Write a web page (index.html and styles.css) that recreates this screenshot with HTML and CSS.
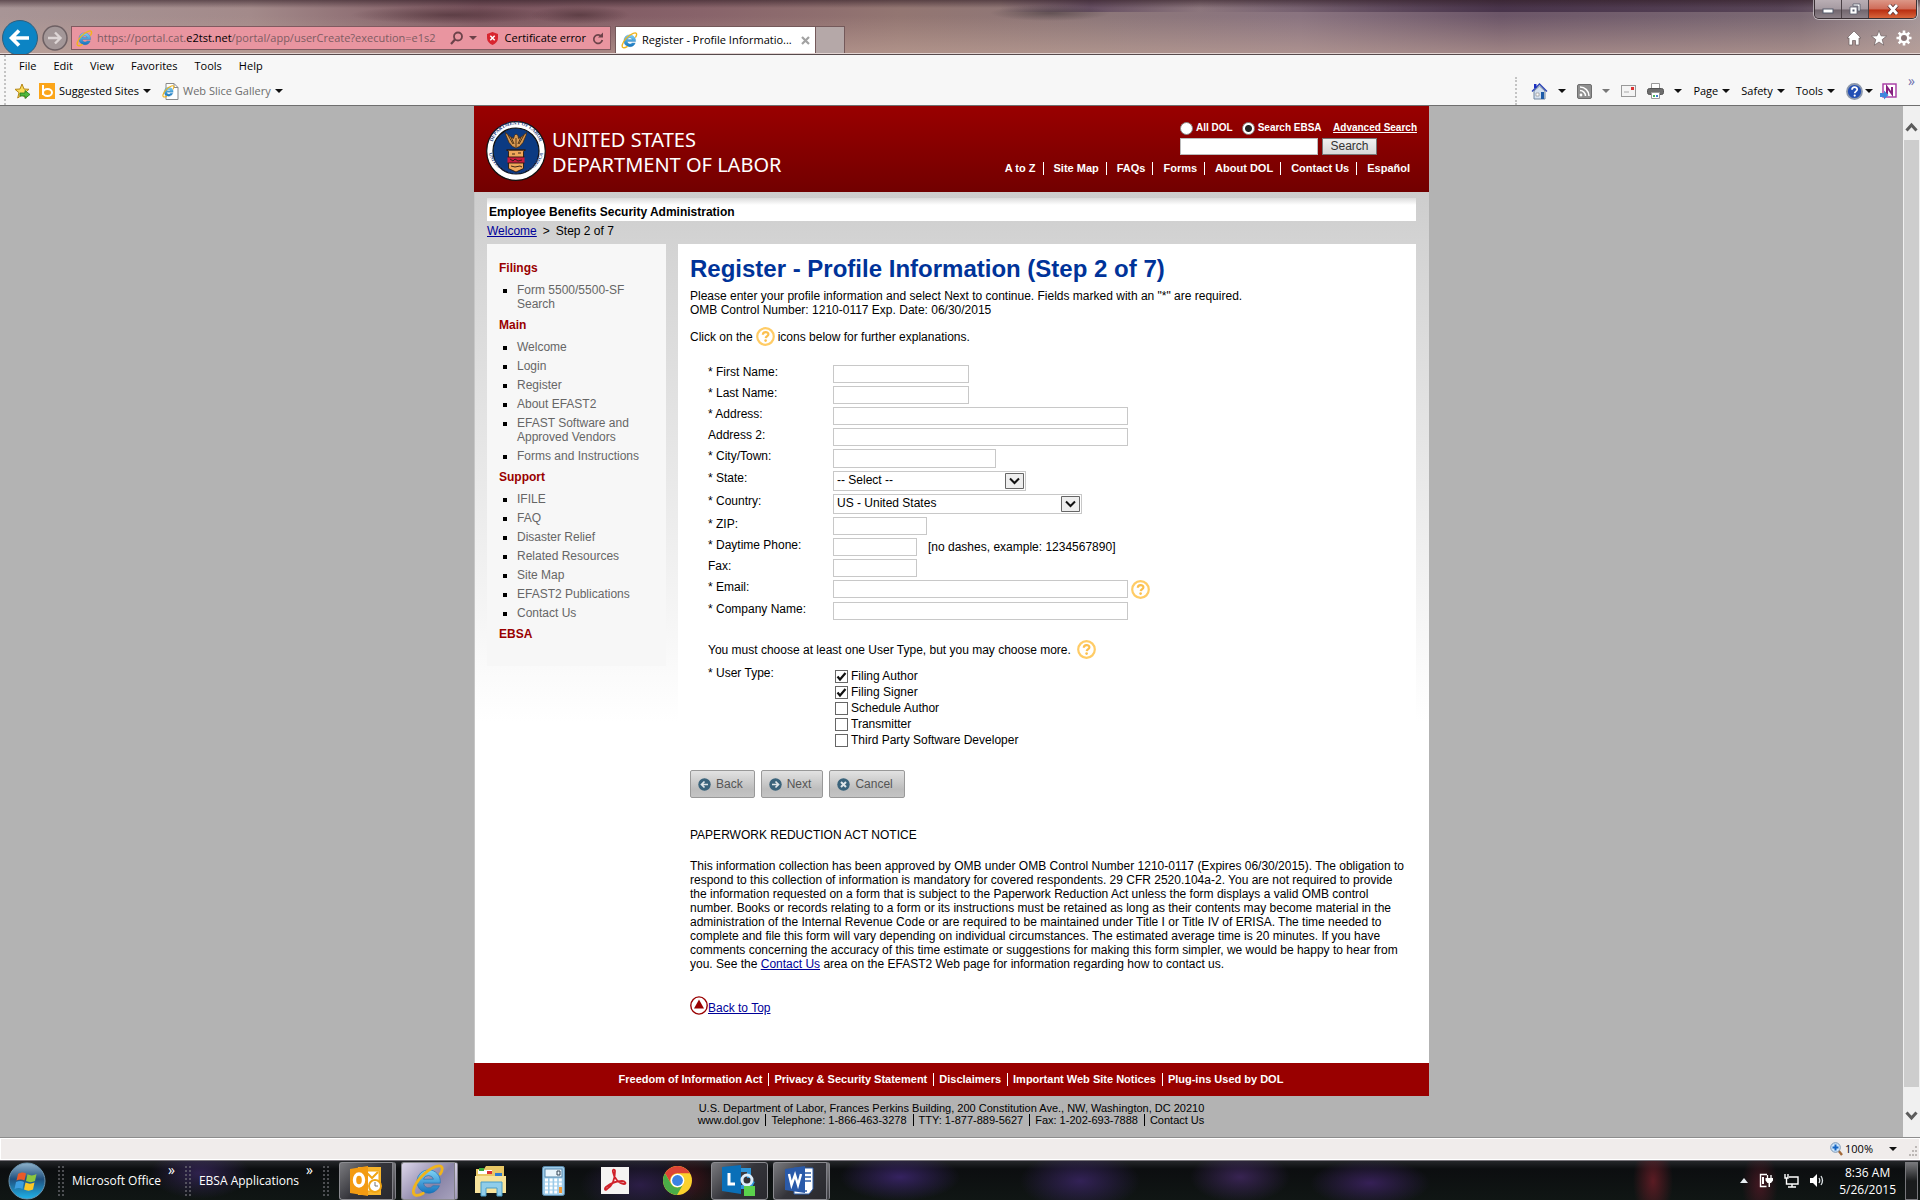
FILE: index.html
```html
<!DOCTYPE html>
<html lang="en">
<head>
  <meta charset="UTF-8" />
  <meta name="viewport" content="width=device-width, initial-scale=1.0"/>
  <title>Register - Profile Information</title>
  <link rel="stylesheet" href="styles.css">
</head>
<body>

<!-- shared icons -->
<svg class="defs" width="0" height="0" aria-hidden="true">
  <defs>
    <linearGradient id="g-ie" x1="0" y1="0" x2="0" y2="1">
      <stop offset="0" stop-color="#7fd3f7"/><stop offset="1" stop-color="#1573bd"/>
    </linearGradient>
    <linearGradient id="g-orb" x1="0" y1="0" x2="0" y2="1">
      <stop offset="0" stop-color="#8fb3cc"/><stop offset=".45" stop-color="#1f4f7d"/><stop offset="1" stop-color="#1fb4ea"/>
    </linearGradient>
    <symbol id="ie" viewBox="0 0 32 32">
      <path d="M16.500 5.500a11 11 0 1 0 10.300 15h-6.100a5 5 0 0 1-9-2.500h15.800a11 11 0 0 0-11-12.500zM11.700 14.300a5 5 0 0 1 9.500 0z" fill="url(#g-ie)" stroke="#1c6fb0" stroke-width=".6"/>
      <path d="M27.500 9.500C31 4 29.500 0 23 2.500 14 6 4.500 16 2.500 24c-1.500 6 3 7 9 3.500" fill="none" stroke="#f0b41c" stroke-width="2.600" stroke-linecap="round"/>
    </symbol>
    <symbol id="help" viewBox="0 0 19 19">
      <circle cx="9.500" cy="9.500" r="8.300" fill="#fff" stroke="#fc6" stroke-width="2.200"/>
      <path d="M6.800 7.800c0-3.600 5.600-3.400 5.600-.6 0 2-2.400 1.700-2.700 4" fill="none" stroke="#fbbf4d" stroke-width="2.200"/>
      <circle cx="9.600" cy="13.600" r="1.300" fill="#fbbf4d"/>
    </symbol>
  </defs>
</svg>

<header class="titlebar">
  <button class="nav-back" aria-label="Back">
    <svg width="36" height="36" viewBox="0 0 36 36"><circle cx="18" cy="18" r="17.500" fill="#0c84c4" stroke="#2f5f7d"/><path d="M27 18H10M17 10.500L9.500 18l7.500 7.500" fill="none" stroke="#fff" stroke-width="3.600"/></svg>
  </button>
  <button class="nav-forward" aria-label="Forward">
    <svg width="26" height="26" viewBox="0 0 26 26"><circle cx="13" cy="13" r="12" fill="#a39798" stroke="#6d6063" stroke-width="1.500"/><path d="M6 13h12M13 7.500l5.500 5.500-5.500 5.500" fill="none" stroke="#ddd5d5" stroke-width="2.400"/></svg>
  </button>
  <div class="address">
    <svg width="17" height="17"><use href="#ie"/></svg>
    <span class="url">https://portal.cat.<b>e2tst.net</b>/portal/app/userCreate?execution=e1s2</span>
    <button aria-label="Search"><svg width="14" height="14" viewBox="0 0 14 14"><circle cx="8" cy="5.500" r="4" fill="none" stroke="#6b4249" stroke-width="1.800"/><path d="M5 8.500L1 13" stroke="#6b4249" stroke-width="2.200"/></svg></button>
    <i class="caret rose"></i>
    <button class="cert"><svg width="11" height="13" viewBox="0 0 11 13"><path d="M5.500 0L11 2v4c0 3-2 5.500-5.500 7C2 11.500 0 9 0 6V2z" fill="#d8242f"/><path d="M3.300 3.800l4.400 4.400m0-4.400L3.300 8.200" stroke="#fff" stroke-width="1.500"/></svg>Certificate error</button>
    <button aria-label="Refresh"><svg width="12" height="13" viewBox="0 0 12 13"><path d="M9.500 4.500A4.300 4.300 0 1 0 10.300 8" fill="none" stroke="#6b4249" stroke-width="1.700"/><path d="M11 .5v5H6z" fill="#6b4249"/></svg></button>
  </div>
  <div class="tab">
    <svg width="17" height="17"><use href="#ie"/></svg>
    <span class="tab-title">Register - Profile Informatio...</span>
    <button aria-label="Close tab"><svg width="9" height="9" viewBox="0 0 9 9"><path d="M1 1l7 7m0-7L1 8" stroke="#a2a2a2" stroke-width="2.200"/></svg></button>
  </div>
  <button class="new-tab" aria-label="New tab"></button>
  <div class="title-right">
    <div class="win-buttons">
      <button aria-label="Minimize"><svg width="12" height="12" viewBox="0 0 12 12"><rect x="1" y="6" width="10" height="4" fill="#fff" stroke="#555a6b"/></svg></button>
      <button aria-label="Restore"><svg width="12" height="12" viewBox="0 0 12 12"><path d="M4 1h7v7H9V3H4z" fill="#fff" stroke="#555a6b" stroke-width=".8"/><path d="M1 4h7v7H1z" fill="#fff" stroke="#555a6b" stroke-width=".8"/><rect x="3.500" y="6.500" width="2" height="2" fill="#555a6b"/></svg></button>
      <button class="close" aria-label="Close"><svg width="12" height="11" viewBox="0 0 12 11"><path d="M2 1l8 9M10 1L2 10" stroke="#5a3336" stroke-width="4.400"/><path d="M2 1l8 9M10 1L2 10" stroke="#fff" stroke-width="2.800"/></svg></button>
    </div>
    <div class="ie-buttons">
      <button aria-label="Home"><svg width="16" height="16" viewBox="0 0 16 16"><path d="M8 1l7 7h-2v7H9.500v-4.500h-3V15H3V8H1z" fill="#fff" stroke="#6c5f60" stroke-width=".7"/></svg></button>
      <button aria-label="Favorites"><svg width="16" height="16" viewBox="0 0 16 16"><path d="M8 .5l2 5.300 5.600.3-4.400 3.500 1.500 5.600L8 12l-4.700 3.200 1.500-5.600L.4 6.100 6 5.800z" fill="#fff" stroke="#6c5f60" stroke-width=".7"/></svg></button>
      <button aria-label="Settings"><svg width="16" height="16" viewBox="0 0 16 16"><g stroke="#fff" stroke-width="2.600"><path d="M8 .5v15M.5 8h15M2.700 2.700l10.600 10.600M13.300 2.700L2.700 13.300"/></g><circle cx="8" cy="8" r="5.400" fill="#fff"/><circle cx="8" cy="8" r="3" fill="#8b7778"/></svg></button>
    </div>
  </div>
</header>

<div class="toolbars">
  <div class="left-bars">
    <nav class="menubar">
      <button>File</button><button>Edit</button><button>View</button><button>Favorites</button><button>Tools</button><button>Help</button>
    </nav>
    <div class="favbar">
      <button aria-label="Add to Favorites bar"><svg width="17" height="17" viewBox="0 0 17 17"><path d="M8 1l2 5 5 .3-4 3.400 1.300 5.300L8 12l-4.300 3L5 9.700l-4-3.400L6 6z" fill="#fbdc5a" stroke="#b58616"/><path d="M6 10h5V7.500l5 4-5 4V13H6z" fill="#4fb83c" stroke="#25761c" stroke-width=".8"/></svg></button>
      <button class="fav"><svg width="16" height="16" viewBox="0 0 16 16"><rect width="16" height="16" fill="#fba51a"/><path d="M4 2v10" stroke="#fff" stroke-width="2"/><ellipse cx="8.500" cy="9.500" rx="4.500" ry="3.500" fill="none" stroke="#fff" stroke-width="2"/></svg>Suggested Sites<i class="caret"></i></button>
      <button class="fav muted"><svg width="17" height="17" viewBox="0 0 17 17"><path d="M4 .5h8l4 4v12H4z" fill="#fff" stroke="#8a8a8a"/><path d="M12 .5v4h4" fill="none" stroke="#8a8a8a"/><svg x="0" y="2" width="13" height="13"><use href="#ie"/></svg></svg>Web Slice Gallery<i class="caret"></i></button>
    </div>
  </div>
  <div class="cmdbar">
    <button aria-label="Home page"><svg width="17" height="17" viewBox="0 0 17 17"><path d="M3 8v8h11V8L8.500 3z" fill="#d5e0ee" stroke="#71869f"/><path d="M1 8.500L8.500 1 16 8.500" fill="none" stroke="#2b43b5" stroke-width="1.300"/><path d="M3 1h2.500v4H3z" fill="#1a2fc0"/><path d="M5 10h3v3H5z" fill="#fff" stroke="#888" stroke-width=".6"/><path d="M10 9h3v7h-3z" fill="#1d5aa8"/></svg><i class="caret"></i></button>
    <button aria-label="Feeds"><svg width="15" height="15" viewBox="0 0 15 15"><rect x=".5" y=".5" width="14" height="14" rx="1.500" fill="#8f8f8f" stroke="#6e6e6e"/><circle cx="4" cy="11" r="1.400" fill="#fff"/><path d="M3 6.500a5.500 5.500 0 0 1 5.500 5.500M3 3a9 9 0 0 1 9 9" fill="none" stroke="#fff" stroke-width="1.500"/></svg><i class="caret grey"></i></button>
    <button aria-label="Read mail"><svg width="15" height="12" viewBox="0 0 15 12"><rect x=".5" y=".5" width="14" height="11" fill="#f4f4f4" stroke="#999"/><rect x="10" y="2" width="3" height="3" fill="#d33"/><path d="M3 7h5" stroke="#aaa"/></svg></button>
    <button aria-label="Print"><svg width="17" height="16" viewBox="0 0 17 16"><path d="M4.500.5h8v6h-8z" fill="#fff" stroke="#9a9a9a"/><rect x=".5" y="5.500" width="16" height="6" rx="2" fill="#6d6d6d" stroke="#555"/><path d="M4.500 9.500h8v6h-8z" fill="#fff" stroke="#9a9a9a"/><path d="M6 12h2v2H6z" fill="#46b45a"/><path d="M9 12h2v2H9z" fill="#3b7bd0"/></svg><i class="caret"></i></button>
    <button class="txt">Page<i class="caret"></i></button>
    <button class="txt">Safety<i class="caret"></i></button>
    <button class="txt">Tools<i class="caret"></i></button>
    <button class="tight" aria-label="Help"><svg width="17" height="17" viewBox="0 0 17 17"><circle cx="8.500" cy="8.500" r="7.500" fill="#234fb4" stroke="#8c98ac" stroke-width="1.800"/><path d="M6 6.800c0-3.500 5.200-3.300 5.200-.4 0 2-2.500 1.900-2.500 3.900" fill="none" stroke="#fff" stroke-width="1.700"/><circle cx="8.700" cy="12.600" r="1.100" fill="#fff"/></svg><i class="caret"></i></button>
    <button aria-label="OneNote"><svg width="17" height="17" viewBox="0 0 17 17"><rect x="3" y="1" width="13" height="13" fill="#fff" stroke="#a637a3" stroke-width="1.400"/><path d="M7 11V4l5 7V4" fill="none" stroke="#86207f" stroke-width="2"/><path d="M0 10h4V7.500l4.500 4.500L4 16.500V14H0z" fill="#3f87dd"/></svg></button>
    <span class="more">»</span>
  </div>
</div>

<div class="viewport">
  <div class="canvas">
    <div class="site">
      <div class="banner">
        <svg class="seal" width="60" height="60" viewBox="0 0 60 60" role="img" aria-label="Department of Labor seal">
          <defs>
            <path id="arc-top" d="M6 33A24.500 24.500 0 1 1 54 33"/>
            <path id="arc-bottom" d="M1.800 27A28.300 28.300 0 0 0 58.200 27"/>
          </defs>
          <circle cx="30" cy="30" r="29.300" fill="#fff" stroke="#111" stroke-width="1.200"/>
          <circle cx="30" cy="30" r="23" fill="#0b3a82" stroke="#111" stroke-width="1.200"/>
          <text class="seal-text"><textPath href="#arc-top" startOffset="50%">DEPARTMENT OF LABOR</textPath></text>
          <text class="seal-text"><textPath href="#arc-bottom" startOffset="50%">UNITED STATES OF AMERICA</textPath></text>
          <path d="M30 27l-3.500-1.500-3.500-4-3-7-.5-3 4.500 4 3.500 2 1-3 1.500-1.500 2 1.500.5 3 3.500-2 4.500-4-.5 3-3 7-3.500 4z" fill="#d99a52" stroke="#432a10" stroke-width=".8"/>
          <path d="M22 14l5 9m-2-7l3 7m10-9l-5 9m2-7l-3 7M30 17v9" stroke="#432a10" stroke-width=".9"/>
          <path d="M21 29h18l-1.500 1.500v17L30 51l-7.500-3.500v-17z" fill="#efa75a" stroke="#2a1a10" stroke-width=".9"/>
          <rect x="21.500" y="36" width="17" height="6" fill="#c91b3f"/>
          <path d="M20 29h20M21.500 36h17M21.500 42h17M24 38l3 2 2-2 3 2 4-1M26 33h3m3-1h3M25 45l4 1 5-1 2 1" fill="none" stroke="#2a1a10" stroke-width=".9"/>
        </svg>
        <div class="dept">UNITED STATES<br>DEPARTMENT OF LABOR</div>
        <div class="banner-right">
          <form class="search">
            <div class="scope">
              <label><input type="radio" name="scope">All DOL</label>
              <label><input type="radio" name="scope" checked>Search EBSA</label>
              <a href="#">Advanced Search</a>
            </div>
            <div class="query">
              <input type="text" aria-label="Search terms">
              <button type="button">Search</button>
            </div>
          </form>
          <nav class="links">
            <a href="#">A to Z</a><a href="#">Site Map</a><a href="#">FAQs</a><a href="#">Forms</a><a href="#">About DOL</a><a href="#">Contact Us</a><a href="#">Español</a>
          </nav>
        </div>
      </div>

      <div class="page">
        <div class="agency">Employee Benefits Security Administration</div>
        <div class="crumbs"><a href="#">Welcome</a><span>&gt;</span><span>Step 2 of 7</span></div>
        <div class="columns">
          <aside class="sidebar">
            <h2>Filings</h2>
            <ul>
              <li><a href="#">Form 5500/5500-SF Search</a></li>
            </ul>
            <h2>Main</h2>
            <ul>
              <li><a href="#">Welcome</a></li>
              <li><a href="#">Login</a></li>
              <li><a href="#">Register</a></li>
              <li><a href="#">About EFAST2</a></li>
              <li><a href="#">EFAST Software and Approved Vendors</a></li>
              <li><a href="#">Forms and Instructions</a></li>
            </ul>
            <h2>Support</h2>
            <ul>
              <li><a href="#">IFILE</a></li>
              <li><a href="#">FAQ</a></li>
              <li><a href="#">Disaster Relief</a></li>
              <li><a href="#">Related Resources</a></li>
              <li><a href="#">Site Map</a></li>
              <li><a href="#">EFAST2 Publications</a></li>
              <li><a href="#">Contact Us</a></li>
            </ul>
            <h2>EBSA</h2>
          </aside>

          <main class="content">
            <h1>Register - Profile Information (Step 2 of 7)</h1>
            <p>Please enter your profile information and select Next to continue. Fields marked with an "*" are required.<br>OMB Control Number: 1210-0117 Exp. Date: 06/30/2015</p>
            <p class="hint">Click on the <svg width="19" height="19"><use href="#help"/></svg> icons below for further explanations.</p>

            <form class="profile">
              <div class="row"><label for="first">* First Name:</label><input id="first" class="w-name" type="text"></div>
              <div class="row"><label for="last">* Last Name:</label><input id="last" class="w-name" type="text"></div>
              <div class="row"><label for="addr">* Address:</label><input id="addr" class="w-long" type="text"></div>
              <div class="row"><label for="addr2">Address 2:</label><input id="addr2" class="w-long" type="text"></div>
              <div class="row"><label for="city">* City/Town:</label><input id="city" class="w-city" type="text"></div>
              <div class="row"><label for="state">* State:</label><select id="state" class="w-state"><option>-- Select --</option></select></div>
              <div class="row"><label for="country">* Country:</label><select id="country" class="w-country"><option>US - United States</option></select></div>
              <div class="row"><label for="zip">* ZIP:</label><input id="zip" class="w-zip" type="text"></div>
              <div class="row"><label for="phone">* Daytime Phone:</label><input id="phone" class="w-phone" type="text"><span class="note">[no dashes, example: 1234567890]</span></div>
              <div class="row"><label for="fax">Fax:</label><input id="fax" class="w-phone" type="text"></div>
              <div class="row"><label for="email">* Email:</label><input id="email" class="w-long" type="text"><svg class="row-help" width="19" height="19"><use href="#help"/></svg></div>
              <div class="row"><label for="company">* Company Name:</label><input id="company" class="w-long" type="text"></div>

              <div class="choose">You must choose at least one User Type, but you may choose more.<svg width="19" height="19"><use href="#help"/></svg></div>
              <div class="row types">
                <span class="label">* User Type:</span>
                <div class="checks">
                  <label><input type="checkbox" checked>Filing Author</label>
                  <label><input type="checkbox" checked>Filing Signer</label>
                  <label><input type="checkbox">Schedule Author</label>
                  <label><input type="checkbox">Transmitter</label>
                  <label><input type="checkbox">Third Party Software Developer</label>
                </div>
              </div>
            </form>

            <div class="actions">
              <button><svg width="13" height="13" viewBox="0 0 13 13"><circle cx="6.500" cy="6.500" r="6.200" fill="#3a637b"/><path d="M10 6.500H4M6.500 3.500l-3 3 3 3" fill="none" stroke="#dfe5e8" stroke-width="1.700"/></svg>Back</button>
              <button><svg width="13" height="13" viewBox="0 0 13 13"><circle cx="6.500" cy="6.500" r="6.200" fill="#3a637b"/><path d="M3 6.500h6M6.500 3.500l3 3-3 3" fill="none" stroke="#dfe5e8" stroke-width="1.700"/></svg>Next</button>
              <button><svg width="13" height="13" viewBox="0 0 13 13"><circle cx="6.500" cy="6.500" r="6.200" fill="#3a637b"/><path d="M4 4l5 5m0-5L4 9" stroke="#dfe5e8" stroke-width="2"/></svg>Cancel</button>
            </div>

            <p class="notice-title">PAPERWORK REDUCTION ACT NOTICE</p>
            <p class="notice">This information collection has been approved by OMB under OMB Control Number 1210-0117 (Expires 06/30/2015). The obligation to respond to this collection of information is mandatory for covered respondents. 29 CFR 2520.104a-2. You are not required to provide the information requested on a form that is subject to the Paperwork Reduction Act unless the form displays a valid OMB control number. Books or records relating to a form or its instructions must be retained as long as their contents may become material in the administration of the Internal Revenue Code or are required to be maintained under Title I or Title IV of ERISA. The time needed to complete and file this form will vary depending on individual circumstances. The estimated average time is 20 minutes. If you have comments concerning the accuracy of this time estimate or suggestions for making this form simpler, we would be happy to hear from you. See the <a href="#">Contact Us</a> area on the EFAST2 Web page for information regarding how to contact us.</p>

            <div class="top-link"><svg width="18" height="19" viewBox="0 0 18 19"><ellipse cx="9" cy="9.500" rx="8.200" ry="8.600" fill="#fff" stroke="#900" stroke-width="1.400"/><path d="M9 3.500l5 9H4z" fill="#900"/></svg><a href="#">Back to Top</a></div>
          </main>
        </div>
      </div>

      <nav class="red-footer">
        <a href="#">Freedom of Information Act</a><a href="#">Privacy &amp; Security Statement</a><a href="#">Disclaimers</a><a href="#">Important Web Site Notices</a><a href="#">Plug-ins Used by DOL</a>
      </nav>
      <footer class="contact">
        <div>U.S. Department of Labor, Frances Perkins Building, 200 Constitution Ave., NW, Washington, DC 20210</div>
        <div class="contact-row"><a href="#">www.dol.gov</a><span>Telephone: 1-866-463-3278</span><span>TTY: 1-877-889-5627</span><span>Fax: 1-202-693-7888</span><a href="#">Contact Us</a></div>
      </footer>
    </div>
  </div>
  <div class="scrollbar">
    <svg width="13" height="11" viewBox="0 0 13 11"><path d="M1.500 8.500l5-5.500 5 5.500" fill="none" stroke="#5c5c5c" stroke-width="3"/></svg>
    <div class="thumb"></div>
    <svg width="13" height="11" viewBox="0 0 13 11"><path d="M1.500 2.500l5 5.500 5-5.500" fill="none" stroke="#5c5c5c" stroke-width="3"/></svg>
  </div>
</div>

<div class="statusbar">
  <button><svg width="13" height="14" viewBox="0 0 13 14"><path d="M8 8l4 5" stroke="#a36a3a" stroke-width="2.400"/><circle cx="5.500" cy="5.500" r="4.800" fill="#cfe6fb" stroke="#7d98b5"/><path d="M5.500 2.500v6m-3-3h6" stroke="#1766c4" stroke-width="2"/></svg>100%<i class="caret"></i></button>
  <svg width="9" height="14" viewBox="0 0 9 14"><path d="M6 4h2v2H6zM3 8h2v2H3zM6 8h2v2H6zM0 12h2v2H0zM3 12h2v2H3zM6 12h2v2H6z" fill="#bdb8b6"/></svg>
</div>

<footer class="taskbar">
  <button class="start" aria-label="Start">
    <svg width="38" height="38" viewBox="0 0 38 38"><circle cx="19" cy="19" r="18" fill="url(#g-orb)" stroke="#6a93ae"/><path d="M10 12c3-2 6-2 8-.5l-1.500 7C14 17 11 17 8.500 18.500z" fill="#ea5a28"/><path d="M19.500 12.300c3 1.500 6 1.500 9-.3L27 19c-3 1.500-6 1.500-9 0z" fill="#8cc63f"/><path d="M8 20c3-1.500 5.500-1.500 8 0l-1.500 7c-2.500-1.500-5-1.500-8 0z" fill="#3c9ee0"/><path d="M17.500 20.500c3 1.500 6 1.500 9 0L25 27.500c-3 1.500-6 1.500-9 0z" fill="#fcc725"/></svg>
  </button>
  <i class="grip"></i>
  <button class="group">Microsoft Office<span class="chev">»</span></button>
  <i class="grip"></i>
  <button class="group">EBSA Applications<span class="chev">»</span></button>
  <i class="grip"></i>
  <div class="apps">
    <button class="app open stack" aria-label="Outlook"><svg width="32" height="30" viewBox="0 0 32 30"><path d="M8 1h23v28H8z" fill="#f7b52c"/><path d="M15 5h14v20H15z" fill="#fff" stroke="#f0a515"/><path d="M16 6l6 6 6-6" fill="none" stroke="#f0a515" stroke-width="2"/><path d="M0 3l18-3v30L0 27z" fill="#f39b12"/><ellipse cx="9" cy="14" rx="4.500" ry="6" fill="none" stroke="#fff" stroke-width="3.400"/><circle cx="25" cy="20" r="6" fill="#fff" stroke="#f0a515" stroke-width="2"/><path d="M25 16v4h3" fill="none" stroke="#777"/></svg></button>
    <button class="app open lit stack" aria-label="Internet Explorer"><svg width="34" height="34"><use href="#ie"/></svg></button>
    <button class="app" aria-label="Explorer"><svg width="34" height="32" viewBox="0 0 34 32"><path d="M2 4h8l2-3h18v27H2z" fill="#e9c765"/><path d="M4 5h14v4H4z" fill="#fff"/><path d="M5 3h5v3H5z" fill="#3caa3c"/><path d="M13 6h5v3h-5z" fill="#d33"/><path d="M21 8h7v3h-7z" fill="#2f7ad0"/><path d="M1 11h31v17H1z" fill="#f7e39b"/><path d="M7 17h21v14h-5v-8H12v8H7z" fill="#8fcdea" stroke="#4b9cc6"/></svg></button>
    <button class="app" aria-label="Calculator"><svg width="23" height="30" viewBox="0 0 23 30"><rect x=".5" y=".5" width="22" height="29" rx="2" fill="#9ccbe9" stroke="#5b89aa"/><rect x="3" y="3" width="17" height="8" fill="#eaf5fc" stroke="#5787ab"/><path d="M15 5h3v4h-3z" fill="none" stroke="#345"/><path d="M3 14h17M3 18h17M3 22h17M3 26h17" stroke="#fff" stroke-width="3" stroke-dasharray="3 1.600"/><path d="M17 21h3v6h-3z" fill="#f09a36"/></svg></button>
    <button class="app" aria-label="Adobe Reader"><svg width="28" height="27" viewBox="0 0 28 27"><path d="M0 0h28v27H0z" fill="#f5f3f2"/><path d="M6 22c5-3 8-10 8-18 0-2-3-2-2 1 1 6 6 12 11 12 3 0 1-3-2-3-6 0-11 2-16 6-2 2-1 4 1 2z" fill="none" stroke="#d0212a" stroke-width="1.800"/></svg></button>
    <button class="app" aria-label="Chrome"><svg width="29" height="29" viewBox="0 0 28 28"><circle cx="14" cy="14" r="14" fill="#fbd12d"/><path d="M1.900 7A14 14 0 0 1 26.100 7H14a7 7 0 0 0-6.600 9.500z" fill="#dd4436"/><path d="M1.900 7A14 14 0 0 0 13.500 28l5.500-9.500A7 7 0 0 1 8 17.500z" fill="#4aab48"/><circle cx="14" cy="14" r="6.600" fill="#fff"/><circle cx="14" cy="14" r="5.200" fill="#3c82e0"/></svg></button>
    <button class="app open" aria-label="Lync"><svg width="34" height="32" viewBox="0 0 34 32"><path d="M0 2l19-2v29L0 26z" fill="#0a6fb8"/><path d="M7 8v11h6" fill="none" stroke="#fff" stroke-width="3"/><path d="M19 5h8v8M31 16l-3 6h-9" fill="none" stroke="#2d94d6" stroke-width="4"/><circle cx="25" cy="15" r="5" fill="none" stroke="#dcedf9" stroke-width="3"/><path d="M22 21h11v10H22z" fill="#5ad14c"/></svg></button>
    <button class="app open stack" aria-label="Word"><svg width="30" height="30" viewBox="0 0 30 30"><path d="M9 2h19v21l-4 5H9z" fill="#fff" stroke="#2d5ca8"/><path d="M20 7h6M20 11h6M20 15h6M14 25h8" stroke="#2d5ca8" stroke-width="1.500"/><path d="M0 3l20-3v27L0 24z" fill="#2a5aa9"/><path d="M4 8l2.500 11L10 9l3 10 3-11" fill="none" stroke="#fff" stroke-width="2.400"/></svg></button>
  </div>
  <div class="tray">
    <svg width="8" height="5" viewBox="0 0 8 5"><path d="M4 0l4 5H0z" fill="#e8eef2"/></svg>
    <svg width="14" height="15" viewBox="0 0 14 15"><path d="M8 1.500H1.500v12h6" fill="none" stroke="#fff" stroke-width="1.400"/><path d="M4 4v7" stroke="#fff" stroke-width="2"/><path d="M6.500 5H14v2.500L12 10h-1v4H9.500v-4h-1l-2-2.500z" fill="#fff"/><path d="M8.500 2v3M12 2v3" stroke="#fff" stroke-width="1.300"/></svg>
    <svg width="15" height="15" viewBox="0 0 15 15"><path d="M5 4h9v7H5M4 14h8M8 11v3" fill="none" stroke="#fff" stroke-width="1.400"/><path d="M1 1v4h3V1M2.500 5v6H5" fill="none" stroke="#fff" stroke-width="1.400"/></svg>
    <svg width="14" height="15" viewBox="0 0 14 15"><path d="M0 5h3l4-4v13l-4-4H0z" fill="#fff"/><path d="M9 5q1.500 2.500 0 5M11 3q3 4.500 0 9" fill="none" stroke="#dce2e5" stroke-width="1.300"/></svg>
    <div class="clock">8:36 AM<br>5/26/2015</div>
    <button class="show-desktop" aria-label="Show desktop"></button>
  </div>
</footer>

</body>
</html>
```

FILE: styles.css
```css
* { box-sizing: border-box; }
body {
  margin: 0;
  min-height: 100vh;
  display: flex;
  flex-direction: column;
  font-family: "Liberation Sans", Arial, sans-serif;
  font-size: 12px;
  line-height: 14px;
  color: #000;
  background: #b3b3b3;
}
svg { display: block; flex: none; }
button {
  font: inherit;
  color: inherit;
  background: none;
  border: 0;
  padding: 0;
}
a { color: #000099; }
.defs { position: absolute; }
.caret {
  border: 4px solid transparent;
  border-top-color: #111;
  border-bottom-width: 0;
}
.caret.grey { border-top-color: #777; }
.caret.rose { border-top-color: #6b4249; }

/* browser frame */
.titlebar, .toolbars, .statusbar, .taskbar {
  font-family: "Segoe UI", "Open Sans", "Noto Sans", sans-serif;
  font-size: 11px;
  line-height: 16px;
}
.titlebar {
  display: flex;
  align-items: flex-start;
  height: 55px;
  padding-left: 2px;
  overflow: hidden;
  border-bottom: 1px solid #574a4c;
  box-shadow: inset 0 -1px #e3d5d3;
  background:
    radial-gradient(ellipse 100px 9px at 450px 15px, rgba(60,35,40,.5), transparent),
    radial-gradient(ellipse 50px 9px at 580px 15px, rgba(60,35,40,.5), transparent),
    radial-gradient(ellipse 60px 8px at 1050px 13px, rgba(55,45,50,.5), transparent),
    linear-gradient(rgba(50,30,38,.6), transparent 8px),
    linear-gradient(to right, transparent 1000px, rgba(76,52,84,.6) 1090px, transparent 1200px, rgba(64,44,68,.8) 1500px, rgba(64,44,68,.6) 1780px, transparent) 0 0 / 100% 12px no-repeat,
    linear-gradient(transparent 30%, rgba(196,166,154,.6)),
    linear-gradient(to right, #a89596, #a38a8a 250px, #7a545e 480px, #88636a 700px, #937672 900px, #8d7779 1100px, #8a7480 1300px, #6c5668 1500px, #7c6a74 1800px, #a39598);
}
.nav-back { margin-top: 20px; }
.nav-forward { margin: 25px 3px 0 4px; }
.address {
  display: flex;
  align-items: center;
  width: 540px;
  height: 24px;
  margin-top: 26px;
  padding: 0 6px 0 4px;
  background: #e995a0;
  border: 1px solid #805a60;
}
.url {
  flex: 1;
  margin-left: 4px;
  color: #7d5c62;
  white-space: nowrap;
}
.url b { font-weight: normal; color: #000; }
.address .caret { margin: 0 10px 0 5px; }
.cert {
  display: flex;
  align-items: center;
  gap: 7px;
  margin-right: 6px;
}
.tab {
  display: flex;
  align-items: center;
  width: 201px;
  height: 27px;
  margin: 26px 0 0 4px;
  padding: 0 5px;
  background: #fff;
  border: 1px solid #74595a;
  border-bottom: 0;
}
.tab-title { flex: 1; margin-left: 4px; white-space: nowrap; }
.new-tab {
  width: 29px;
  height: 27px;
  margin-top: 26px;
  background: #b5a8a8;
  border: 1px solid #74595a;
  border-width: 1px 1px 0 0;
}
.title-right {
  display: flex;
  flex-direction: column;
  align-items: flex-end;
  gap: 11px;
  margin-left: auto;
  padding-right: 3px;
}
.win-buttons {
  display: flex;
  height: 19px;
  border: 1px solid #3a3034;
  border-top: 0;
  border-radius: 0 0 5px 5px;
  box-shadow: 0 0 0 1px rgba(255,255,255,.5);
  overflow: hidden;
}
.win-buttons button {
  display: flex;
  align-items: center;
  justify-content: center;
  width: 27px;
  background: linear-gradient(#b9aeb4, #a59aa1 50%, #71656d 55%, #8d8289);
  border-right: 1px solid #4a4045;
}
.win-buttons .close {
  width: 47px;
  background: linear-gradient(#dc9787, #cf6b58 50%, #b92d10 55%, #d8653c);
  border-right: 0;
}
.ie-buttons { display: flex; gap: 9px; padding-right: 5px; }

.toolbars {
  display: flex;
  justify-content: space-between;
  height: 51px;
  padding-left: 4px;
  background: #f7f7f7;
  border-bottom: 1px solid #6f6f6f;
}
.left-bars { padding-left: 11px; border-left: 2px dotted #c4c4c4; }
.menubar {
  display: flex;
  gap: 17px;
  height: 22px;
  align-items: center;
  padding-left: 2px;
}
.favbar {
  display: flex;
  align-items: center;
  gap: 8px;
  height: 28px;
  margin-left: -3px;
}
.fav { display: flex; align-items: center; gap: 4px; margin-right: 3px; }
.muted { color: #6d6d6d; }
.cmdbar {
  display: flex;
  align-items: center;
  align-self: flex-end;
  height: 28px;
  padding: 0 5px 0 14px;
  gap: 11px;
  border-left: 2px dotted #c4c4c4;
}
.cmdbar button { display: flex; align-items: center; gap: 10px; }
.cmdbar .txt { gap: 4px; }
.cmdbar .tight { gap: 2px; margin-right: -4px; }
.more { align-self: flex-start; color: #6f6fae; font-size: 14px; line-height: 8px; }

/* scrolling area */
.viewport {
  flex: 1;
  display: flex;
  border-bottom: 1px solid #8d8d8d;
}
.canvas { flex: 1; }
.scrollbar {
  display: flex;
  flex-direction: column;
  align-items: center;
  width: 17px;
  padding: 16px 0;
  background: #f0f0f0;
}
.thumb {
  flex: 1;
  width: 15px;
  margin: 7px 0 23px;
  background: #cdcdcd;
}

/* site */
.site { max-width: 955px; margin: 0 auto; }
.banner {
  display: flex;
  height: 86px;
  padding: 15px 12px 0;
  background: linear-gradient(#990000, #720000);
}
.seal-text {
  font-family: "Liberation Serif", serif;
  font-size: 5px;
  font-weight: bold;
  text-anchor: middle;
  fill: #1c3e82;
}
.dept {
  margin: 6px 0 0 6px;
  font-family: Tahoma, "Noto Sans", sans-serif;
  font-size: 20px;
  line-height: 25px;
  color: #fff;
}
.banner-right {
  display: flex;
  flex-direction: column;
  align-items: flex-end;
  margin-left: auto;
  color: #fff;
  font-weight: bold;
}
.search { width: 237px; }
.scope {
  display: flex;
  align-items: center;
  font-size: 10px;
  height: 14px;
}
.scope label { display: flex; align-items: center; gap: 3px; margin-right: 9px; }
.scope a { margin-left: auto; }
.scope input {
  appearance: none;
  width: 13px;
  height: 13px;
  margin: 0;
  border: 1px solid #888;
  border-radius: 50%;
  background: #fff;
}
.scope input:checked { background: radial-gradient(#222 3px, #fff 4px); }
.query { display: flex; gap: 4px; margin-top: 3px; }
.query input {
  width: 138px;
  height: 17px;
  border: 1px solid #bbb;
  padding: 0 2px;
}
.query button {
  width: 55px;
  height: 17px;
  color: #333;
  font-weight: normal;
  line-height: 15px;
  background: linear-gradient(#f0f0f0, #d8d8d8);
  border: 1px solid #777;
}
.banner-right a { color: #fff; }
.links { display: flex; margin-top: 7px; font-size: 11px; }
.links a {
  padding: 0 7px 0 10px;
  line-height: 13px;
  text-decoration: none;
  border-right: 1px solid #fff;
}
.links a:last-child { border: 0; }

.page {
  padding: 6px 13px 0;
  background: linear-gradient(#cdcdcd, #d3d3d3 50px, #fff 530px);
  border: 1px solid #c6c6c6;
  border-width: 0 0 0 1px;
}
.agency {
  height: 23px;
  margin-left: -1px;
  padding: 7px 2px 0;
  font-weight: bold;
  background: linear-gradient(#dcdcdc, #fff 7px);
}
.crumbs {
  display: flex;
  gap: 6px;
  height: 23px;
  margin-left: -1px;
  padding-top: 3px;
}
.columns { display: flex; gap: 12px; align-items: flex-start; margin-left: -1px; }
.sidebar {
  width: 179px;
  flex: none;
  padding: 17px 12px;
  background: #f7f7f7;
}
.sidebar h2 {
  margin: 0 0 8px;
  font-size: 12px;
  line-height: 14px;
  color: #990000;
}
.sidebar ul {
  margin: 0 0 7px;
  padding-left: 18px;
  list-style: square;
}
.sidebar li { margin-bottom: 5px; }
.sidebar li:last-child { margin-bottom: 0; }
.sidebar a { color: #666; text-decoration: none; }
.content {
  flex: 1;
  min-width: 0;
  padding: 12px 12px 48px;
  background: #fff;
}
h1 {
  margin: 0;
  font-size: 24px;
  line-height: 26px;
  color: #003399;
}
p { margin: 7px 0 0; }
.hint { display: flex; align-items: center; gap: 3px; margin-top: 10px; }
.profile { padding: 19px 0 0 18px; }
.row { display: flex; margin-bottom: 3px; }
.row > label, .label { width: 125px; }
.row input[type="text"], .row select {
  height: 18px;
  border: 1px solid #c8c8c8;
  background: #fff;
}
.row .w-name { width: 136px; }
.row .w-long { width: 295px; }
.row input.w-city { width: 163px; height: 19px; }
.row .w-zip { width: 94px; }
.row .w-phone { width: 84px; }
.row .w-state { width: 193px; }
.row .w-country { width: 249px; }
.row select {
  appearance: none;
  height: 20px;
  padding: 0 3px 2px;
  font: inherit;
  color: #000;
  background: #fff url("data:image/svg+xml,%3Csvg xmlns='http://www.w3.org/2000/svg' width='19' height='16'%3E%3Cpath d='M.5.5h18v15H.5z' fill='%23eee' stroke='%23666'/%3E%3Cpath d='M5 5.500l4.500 4.500L14 5.500' fill='none' stroke='%23111' stroke-width='2'/%3E%3C/svg%3E") no-repeat right 1px center;
}
.note { margin: 2px 0 0 11px; }
.row-help { margin-left: 3px; }
.choose {
  display: flex;
  align-items: center;
  gap: 6px;
  margin-top: 20px;
}
.types { margin-top: 7px; }
.checks { display: flex; flex-direction: column; padding: 2px; }
.checks label { display: flex; align-items: center; gap: 3px; height: 16px; }
.checks input {
  appearance: none;
  width: 13px;
  height: 13px;
  margin: 0;
  border: 1px solid #666;
  background: #fff;
}
.checks input:checked {
  background: url("data:image/svg+xml,%3Csvg xmlns='http://www.w3.org/2000/svg' width='11' height='11'%3E%3Cpath d='M1.500 5.500L4 8.500 9.500 2' fill='none' stroke='%23111' stroke-width='2.200'/%3E%3C/svg%3E");
}
.actions { display: flex; gap: 6px; margin-top: 20px; }
.actions button {
  display: flex;
  align-items: center;
  gap: 5px;
  height: 28px;
  padding: 0 11px 0 7px;
  color: #555;
  border: 1px solid #999;
  border-radius: 2px;
  background: linear-gradient(#e2e2e2, #bdbdbd 70%, #c4c4c4);
}
.notice-title { margin-top: 30px; }
.notice { margin-top: 17px; }
.top-link { display: flex; align-items: flex-end; margin-top: 25px; }

.red-footer {
  display: flex;
  justify-content: center;
  padding: 10px 0;
  font-size: 11px;
  font-weight: bold;
  background: #990000;
}
.red-footer a, .contact-row > * {
  padding: 0 6px 0 5px;
  line-height: 13px;
  color: #fff;
  text-decoration: none;
  border-right: 1px solid #fff;
}
.contact {
  padding-top: 6px;
  font-size: 11px;
  line-height: 12px;
  text-align: center;
}
.contact-row { display: flex; justify-content: center; }
.contact-row > * { color: #000; line-height: 12px; border-color: #000; }
.red-footer a:last-child, .contact-row > :last-child { border: 0; }

/* status bar and taskbar */
.statusbar {
  display: flex;
  align-items: center;
  justify-content: flex-end;
  gap: 12px;
  height: 22px;
  padding-right: 1px;
  background: #f0eceb;
  border: 1px solid #fff;
}
.statusbar button { display: flex; align-items: center; gap: 2px; }
.statusbar .caret { margin-left: 14px; }
.taskbar {
  display: flex;
  align-items: center;
  height: 40px;
  padding: 0 2px 0 8px;
  color: #fff;
  font-size: 12px;
  border-top: 1px solid #77737a;
  background:
    radial-gradient(ellipse 50px 26px at 200px 12px, rgba(62,42,104,.7), transparent),
    radial-gradient(ellipse 60px 30px at 640px 24px, rgba(56,34,92,.7), transparent),
    radial-gradient(ellipse 30px 28px at 690px 20px, rgba(90,20,30,.6), transparent),
    radial-gradient(ellipse 60px 24px at 900px 16px, rgba(70,42,130,.7), transparent),
    radial-gradient(ellipse 60px 30px at 1080px 20px, rgba(60,38,104,.8), transparent),
    radial-gradient(ellipse 50px 26px at 1240px 16px, rgba(74,44,110,.7), transparent),
    radial-gradient(ellipse 60px 24px at 1370px 22px, rgba(64,36,104,.8), transparent),
    radial-gradient(ellipse 20px 40px at 1653px 20px, rgba(110,30,40,.8), transparent),
    radial-gradient(ellipse 18px 34px at 1760px 24px, rgba(90,26,40,.7), transparent),
    linear-gradient(#242629, #0c0e10 8px, #101614);
}
.grip {
  width: 8px;
  height: 32px;
  opacity: .6;
  background: radial-gradient(circle, #77777d 1px, transparent 1px) 0 0 / 4px 4px;
}
.start { margin-right: 11px; }
.group { display: flex; align-items: center; height: 32px; margin: 0 9px 0 7px; }
.chev { align-self: flex-start; margin-left: 7px; font-size: 14px; line-height: 10px; }
.apps { display: flex; align-items: center; gap: 5px; margin-left: 9px; }
.app {
  display: flex;
  align-items: center;
  justify-content: center;
  width: 57px;
  height: 38px;
}
.app.open {
  border: 1px solid #8b8b90;
  border-radius: 3px;
  background: linear-gradient(135deg, #7a7a7e, #34343a 50%, #29292e);
}
.app.lit { background: linear-gradient(135deg, #dcd5ea, #8a84a6 60%, #a7a2bd); }
.app.stack { border-right: 4px double #808087; }
.tray {
  display: flex;
  align-items: center;
  gap: 11px;
  margin-left: auto;
}
.clock { margin: 0 -2px 0 4px; text-align: center; line-height: 17px; }
.show-desktop {
  width: 13px;
  height: 38px;
  border: 1px solid #77777b;
  background: linear-gradient(#77777b, #1a1c1d 50%);
}
```
